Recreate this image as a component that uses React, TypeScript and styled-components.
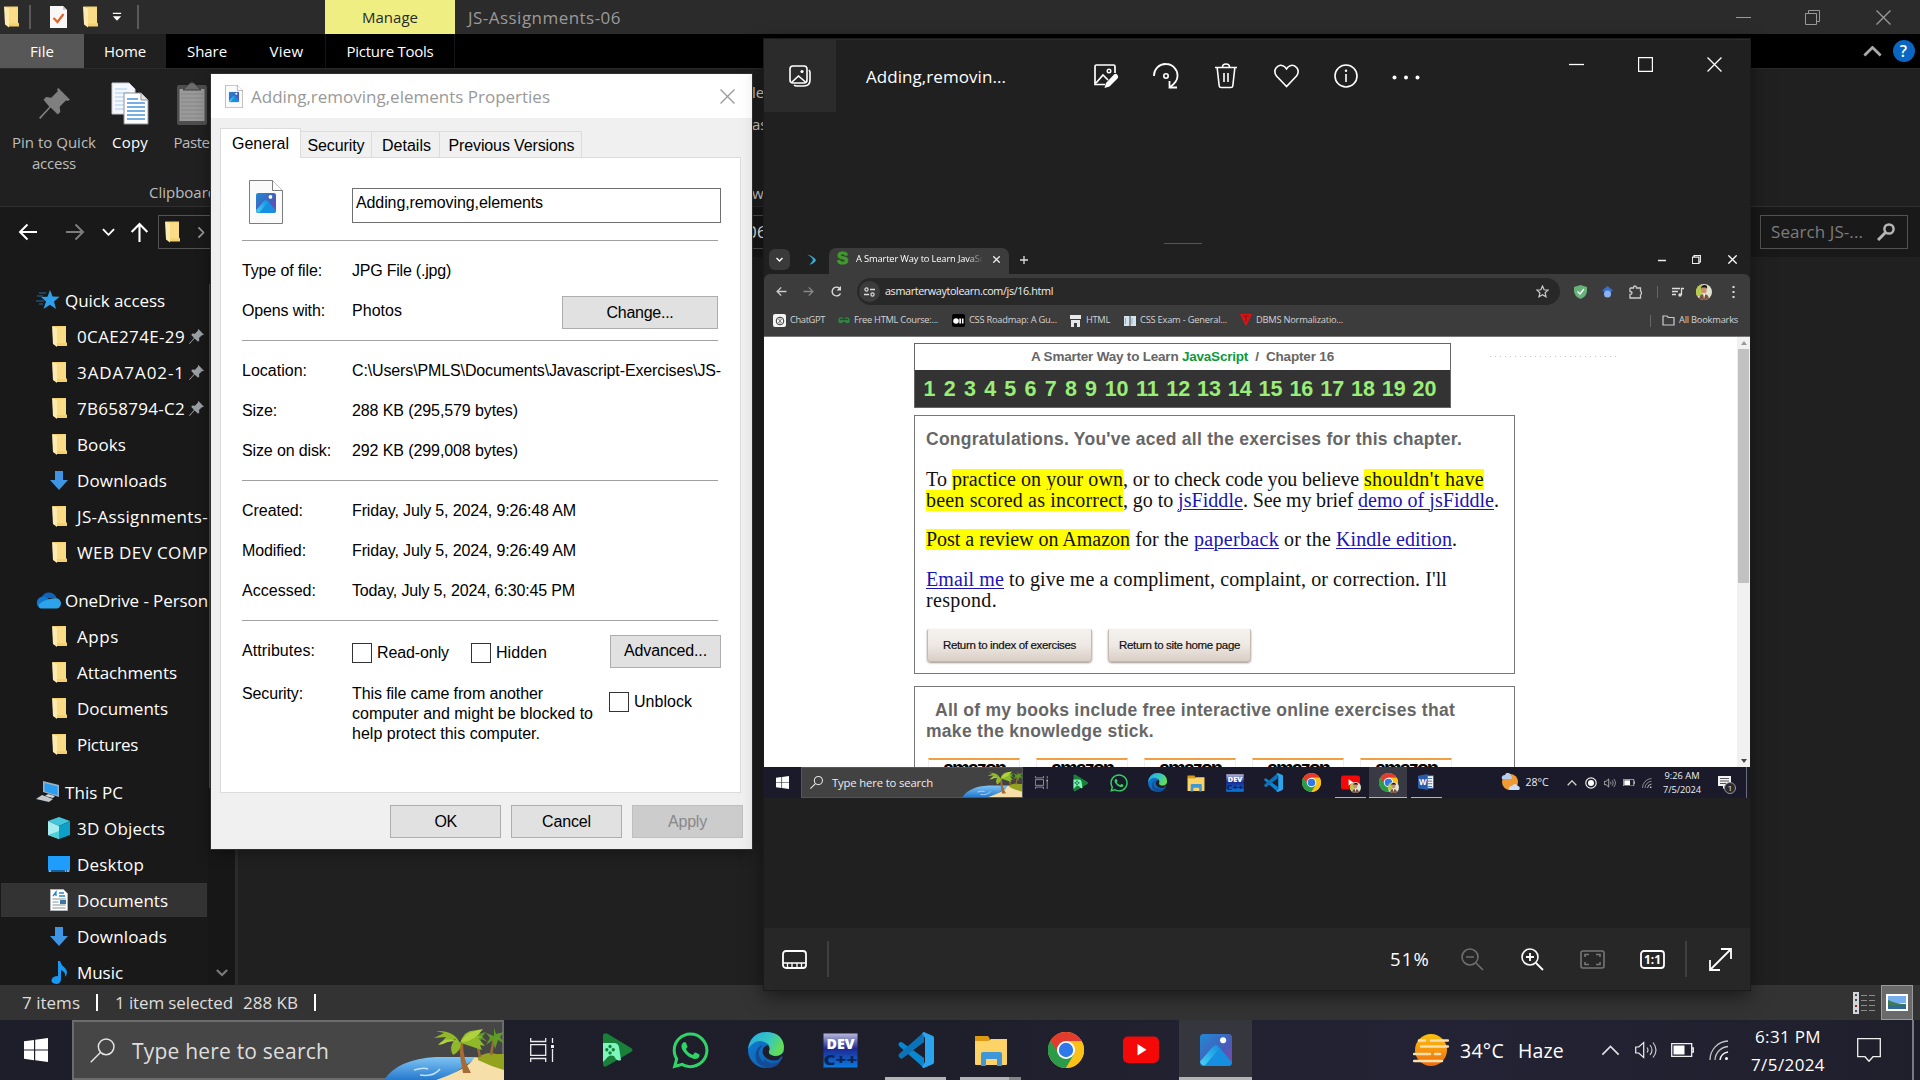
import React, { useLayoutEffect, useRef } from "react";
import styled, { createGlobalStyle, css } from "styled-components";
import { FaWhatsapp } from "react-icons/fa";

const ui = `"Open Sans", "Noto Sans", sans-serif`;
const arial = `"Liberation Sans", Arial, sans-serif`;
const serif = `"Liberation Serif", Georgia, serif`;

const Global = createGlobalStyle`
  *, *::before, *::after { box-sizing: border-box; }
  body { margin: 0; background: #202020; overflow: hidden; }
  svg { display: block; flex: none; }
`;

/* ---------- text that tracks itself to a set measure ---------- */

const FitSpan = styled.span`
  display: inline-block;
  width: max-content;
  white-space: pre;
  flex: none;
`;

function Fit({ w, children }: { w: number; children: string }) {
  const ref = useRef<HTMLSpanElement>(null);
  useLayoutEffect(() => {
    const el = ref.current;
    if (!el) return;
    el.style.letterSpacing = "0px";
    const natural = el.getBoundingClientRect().width;
    el.style.letterSpacing = `${(w - natural) / children.length}px`;
  }, [w, children]);
  return <FitSpan ref={ref}>{children}</FitSpan>;
}

/* ---------- small icons ---------- */

const Folder = ({ w = 15, h = 21 }) => (
  <svg width={w} height={h} viewBox="0 0 15 21">
    <path d="M1 0h13v16l1 1v3H4z" fill="#f5d06f" />
    <path d="M5 1h9v16H5z" fill="#f9dc85" />
    <path d="M0 0l5 2v19l-4-3z" fill="#fdeaae" />
  </svg>
);

const Pushpin = ({ s = 16, c = "#9a9fa5" }) => (
  <svg width={s} height={s} viewBox="0 0 24 24">
    <path d="M15 0l9 9-2 1-1-.5-5 5 .5 4-2 2-5.500-5.500L1 24l-1-1 8-8.500L3.500 9l2-2 4 .5 5-5L14 1z" fill={c} />
  </svg>
);

const Cross = ({ s = 14, c = "#999", t = 1.2 }) => (
  <svg width={s} height={s} viewBox="0 0 14 14">
    <path d="M.5.5l13 13M13.500.5l-13 13" stroke={c} strokeWidth={t} fill="none" />
  </svg>
);

const Minus = ({ w = 15, c = "#999", t = 1 }) => (
  <svg width={w} height={4} viewBox={`0 0 ${w} 4`}>
    <path d={`M0 2.500h${w}`} stroke={c} strokeWidth={t} />
  </svg>
);

const Restore = ({ s = 15, c = "#999", t = 1 }) => (
  <svg width={s} height={s} viewBox="0 0 15 15">
    <path d="M.5 3.500h11v11H.5zM3.500 3.500v-3h11v11h-3" stroke={c} strokeWidth={t} fill="none" />
  </svg>
);

const Chevron = ({ w = 14, h = 8, c = "#fff", t = 2, up = false }) => (
  <svg width={w} height={h} viewBox="0 0 14 8">
    <path d={up ? "M1 7l6-6 6 6" : "M1 1l6 6 6-6"} stroke={c} strokeWidth={t} fill="none" />
  </svg>
);

const Arrow = ({ c = "#fff", s = 20, t = 2, turn = 0 }) => (
  <svg width={s} height={s} viewBox="0 0 20 20">
    <path d="M19 10H2M9.500 2.500L2 10l7.500 7.500" transform={`rotate(${turn} 10 10)`} stroke={c} strokeWidth={t} fill="none" />
  </svg>
);

const PhotoGlyph = ({ w = 36, h = 36 }) => (
  <svg width={w} height={h} viewBox="0 0 36 36" preserveAspectRatio="none">
    <defs>
      <linearGradient id="pgBack" x1="0" y1="0" x2="1" y2="1">
        <stop offset="0" stopColor="#1e8ad6" />
        <stop offset=".6" stopColor="#4a5bb8" />
        <stop offset="1" stopColor="#8446a8" />
      </linearGradient>
      <linearGradient id="pgHill" x1="0" y1="1" x2="1" y2="0">
        <stop offset="0" stopColor="#45d3f5" />
        <stop offset="1" stopColor="#1490df" />
      </linearGradient>
    </defs>
    <rect width="36" height="36" rx="4" fill="url(#pgBack)" />
    <path d="M1 33L15 14q3-3 6 0l15 18q-1 4-4 4H4q-2 0-3-3z" fill="#168fe0" />
    <path d="M0 31L14 15q4-4 8 1L6 35q-5 1-6-4z" fill="url(#pgHill)" />
    <circle cx="26" cy="7" r="3.400" fill="#fff" />
  </svg>
);

const ImageFile = ({ w = 34, h = 44 }) => (
  <svg width={w} height={h} viewBox="0 0 34 44">
    <path d="M.5.5h23l10 10v33H.5z" fill="#fafafa" stroke="#7c7c7c" />
    <path d="M23.500.5v10h10" fill="#fff" stroke="#7c7c7c" />
    <g transform="translate(7 13)"><PhotoGlyph w={20} h={20} /></g>
  </svg>
);

const CheckDoc = () => (
  <svg width="17" height="22" viewBox="0 0 17 22">
    <path d="M0 0h13l4 4v18H0z" fill="#f7f7f7" />
    <path d="M13 0v4h4" fill="#ccc" />
    <path d="M3.500 12l4 4 6-8" stroke="#e2622b" strokeWidth="2.200" fill="none" />
  </svg>
);

const CopyIcon = () => (
  <svg width="38" height="43" viewBox="0 0 38 43">
    <path d="M1 1h17l6 6v25H1z" fill="#f4f8fd" stroke="#c8ccd2" />
    <path d="M4 7h12M4 11h15M4 15h9M4 19h9M4 23h9M4 27h9" stroke="#a9c8ee" />
    <path d="M13 11h17l7 7v24H13z" fill="#fff" stroke="#8d9299" />
    <path d="M30 11v7h7" fill="#e4e4e4" stroke="#8d9299" />
    <path d="M16 17h11M16 21h18M16 25h18M16 29h18M16 33h18M16 37h18" stroke="#4c94dc" strokeWidth="1.300" />
  </svg>
);

const PasteIcon = () => (
  <svg width="30" height="43" viewBox="0 0 30 43">
    <rect x="0" y="3" width="30" height="40" rx="2" fill="#4e4e4e" />
    <path d="M2.500 7h25v32h-25z" fill="#9a9a9a" />
    <path d="M4 12h22M4 16h22M4 20h22M4 24h22M4 28h22M4 32h22M4 36h22" stroke="#868686" />
    <path d="M6 8l5-5q4-5 8 0l5 5z" fill="#6c6c6c" stroke="#3c3c3c" />
  </svg>
);

const Star = () => (
  <svg width="24" height="20" viewBox="0 0 24 20">
    <path d="M14 0l2.600 6.500 7 .3-5.600 4.700 2 7.500-6-4.200L7.500 19l2.500-7.500-5-4.500 6.500-.3z" fill="#2e9fe8" />
    <path d="M3 3h7M1 6h6M0 11h8M3 14h4" stroke="#1e6fae" strokeWidth="1.200" />
  </svg>
);

const DownArrow = () => (
  <svg width="18" height="19" viewBox="0 0 18 19">
    <path d="M5 0h8v9h5l-9 10-9-10h5z" fill="#3e95e4" />
  </svg>
);

const Cloud = () => (
  <svg width="25" height="17" viewBox="0 0 25 17">
    <path d="M5 6Q8 0 13.500.5 19 1 20.500 6z" fill="#0f63b8" />
    <path d="M4 16a6 6 0 0 1 1-11q6-1 9 4l6 7z" fill="#1178cf" />
    <path d="M4.500 16.500Q2 15 3 12q6-5 17-6 5 1 5 6-1 4-4 4.500z" fill="#2ca3ea" />
  </svg>
);

const ThisPc = () => (
  <svg width="24" height="22" viewBox="0 0 24 22">
    <path d="M7 0l16 4v12L7 11z" fill="#9bb0c2" />
    <path d="M8.500 2l13 3.400v8.800l-13-4z" fill="#2b9df0" />
    <path d="M12 13l7 2-2 2-8-2z" fill="#cfd5da" />
    <path d="M6 14l11 4-4 3-13-3z" fill="#c1c8ce" />
  </svg>
);

const Cube = () => (
  <svg width="22" height="22" viewBox="0 0 22 22">
    <path d="M11 0l11 4-11 5L0 4z" fill="#43c6dc" />
    <path d="M0 4l11 5v13L0 18z" fill="#a7ecef" />
    <path d="M22 4L11 9v13l11-4z" fill="#0e9fc9" />
    <path d="M0 18l11-4v8z" fill="#4fd0d9" />
  </svg>
);

const DesktopIcon = () => (
  <svg width="22" height="16" viewBox="0 0 22 16">
    <path d="M0 0h22v16H0z" fill="#1f9dfc" />
    <path d="M0 14h22v2H0z" fill="#0f5f9f" />
    <path d="M1 15h2M17 15h1M19 15h2" stroke="#fff" />
  </svg>
);

const DocIcon = () => (
  <svg width="18" height="22" viewBox="0 0 18 22">
    <path d="M.5.5h13l4 4v17H.5z" fill="#fff" stroke="#b0b5ba" />
    <path d="M3 7l3-4v4M9 4h5M9 7h6" stroke="#2b86c9" strokeWidth="1.300" fill="none" />
    <path d="M2.500 10h13M2.500 13h6M2.500 16h13M2.500 19h13" stroke="#8d9298" />
    <path d="M10 11h6v4h-6z" fill="#3a76a8" />
  </svg>
);

const MusicIcon = () => (
  <svg width="16" height="23" viewBox="0 0 16 23">
    <path d="M7 0h2q1 4 5 7 4 4 0 9 1-5-4-7v9q0 5-5 5-5-.5-4.500-4 1-4 6.500-4z" fill="#1a97ee" />
  </svg>
);

const Lens = ({ s = 24, c = "#e4e4e4", t = 1.4 }) => (
  <svg width={s} height={s} viewBox="0 0 24 24">
    <circle cx="15.500" cy="8.500" r="7.500" stroke={c} strokeWidth={t} fill="none" />
    <path d="M10 14L.7 23.300" stroke={c} strokeWidth={t} />
  </svg>
);

const WinLogo = ({ s = 24 }) => (
  <svg width={s} height={s} viewBox="0 0 24 24">
    <path d="M0 3.300l10-1.400v9.600H0zM11.200 1.700L24 0v11.500H11.200zM0 12.600h10v9.600L0 20.800zM11.200 12.600H24V24l-12.800-1.800z" fill="#fff" />
  </svg>
);

const Beach = ({ w = 120, h = 56 }) => (
  <svg width={w} height={h} viewBox="0 0 120 56">
    <defs>
      <linearGradient id="sea" x1="0" y1="0" x2="0" y2="1">
        <stop offset="0" stopColor="#7ec4f3" />
        <stop offset="1" stopColor="#2779cf" />
      </linearGradient>
    </defs>
    <path d="M0 56Q14 35 52 33h42L60 56z" fill="url(#sea)" />
    <path d="M52 56Q84 45 90 34l30-4v26z" fill="#f6dfa8" />
    <path d="M94 33q10-6 18-3l8 0v16Q106 42 94 36z" fill="#93a31e" />
    <path d="M96 33l-4-19M107 31l3-18" stroke="#9a6a35" strokeWidth="2.500" />
    <path d="M93 12l-9-3 6 5-5 5 8-4 1 9 3-9 7 3-6-5 4-5-7 2-3-4zM110 12l-8-3 4 5-4 7 7-5 2 9 3-9 7 4-5-7 4-5-8 2-2-6z" fill="#5f9c27" />
    <path d="M75 20q1 15 4 29h8Q79 36 79 19z" fill="#a56b35" />
    <path d="M76 19Q70 6 52 7l8 2-10 5 12-1-7 8 17-6q-8 7-3 16 8-4 8-12l21 7-2-5 5 1-7-8 6-1-11-2 5-4Q81 4 76 19z" fill="#8fb92b" />
    <path d="M77 17q8-11 22-12-8 12-20 13zM74 18Q62 12 54 21l5-1q6-4 15-2z" fill="#b0d23c" />
    <path d="M30 46q10-3 14-1M36 51q14 2 20-6" stroke="#bfe3fb" strokeWidth="1.500" fill="none" />
  </svg>
);

const TaskView = ({ s = 24, c = "#ececec" }) => (
  <svg width={s} height={s} viewBox="0 0 24 24">
    <path d="M.7 0v3.500h15V0M.7 24v-3.500h15V24M.7 6.700h15v10.600H.7zM22.500 0v5M22.500 11v13" stroke={c} strokeWidth="1.300" fill="none" />
    <path d="M21 7h3v3h-3z" fill={c} />
  </svg>
);

const PlayGames = ({ s = 36 }) => (
  <svg width={s} height={s} viewBox="0 0 36 36">
    <path d="M5 3q1-3 5-1l23 14q3 2 0 4L9 34q-4 2-4-2z" fill="#188038" />
    <path d="M5 11h11q4 0 5 4l2 13q-4 2-7-4-5-2-8 3l-3 3z" fill="#7df5bd" />
    <path d="M12 12.800a1.700 1.700 0 1 0 .1 0M12 19.200a1.700 1.700 0 1 0 .1 0M8.800 16a1.700 1.700 0 1 0 .1 0M15.200 16a1.700 1.700 0 1 0 .1 0" fill="#188038" />
  </svg>
);

const Edge = ({ s = 36 }) => (
  <svg width={s} height={s} viewBox="0 0 36 36">
    <defs>
      <linearGradient id="edgeTop" x1="0" y1="0" x2="1" y2=".4">
        <stop offset="0" stopColor="#2aa8e0" />
        <stop offset=".6" stopColor="#35c6c4" />
        <stop offset="1" stopColor="#62dc58" />
      </linearGradient>
      <linearGradient id="edgeLow" x1="0" y1="0" x2="1" y2="1">
        <stop offset="0" stopColor="#0f7fd4" />
        <stop offset="1" stopColor="#1058a8" />
      </linearGradient>
    </defs>
    <circle cx="18" cy="18" r="18" fill="url(#edgeLow)" />
    <path d="M0 17Q3 0 19 0q16 1 17 15 0 9-9 9-7 0-6-5 2-3-1-7Q9 4 0 17z" fill="url(#edgeTop)" />
    <path d="M15 13q-8 8-1 16 8 6 18 1-2 4-8 5.500Q5 36 8 20q2-6 7-7z" fill="#134c94" />
    <path d="M20 13q-7 2-5 9 4 8 15 6l4-4 2 3q-1 2-3 3Q24 36 36 36V20q-4 5-10 4-6-1-5-5 1-3-1-6z" fill="#1f1f2c" />
    <path d="M18 36q8 0 14-6-10 4-16-3 0 6 2 9z" fill="#134c94" />
  </svg>
);

const DevCpp = ({ s = 35 }) => (
  <svg width={s} height={s} viewBox="0 0 35 35">
    <defs>
      <linearGradient id="devBg" x1="0" y1="0" x2="0" y2="1">
        <stop offset="0" stopColor="#b9b9dd" />
        <stop offset=".45" stopColor="#1e2a94" />
        <stop offset="1" stopColor="#0a7be0" />
      </linearGradient>
    </defs>
    <path d="M.5.5h34v34H.5z" fill="url(#devBg)" />
    <text x="17.500" y="15.500" textAnchor="middle" fontFamily="Open Sans, sans-serif" fontWeight="800" fontSize="13.500" textLength="28" lengthAdjust="spacingAndGlyphs" fill="#fff">DEV</text>
    <text x="17.500" y="31.500" textAnchor="middle" fontFamily="Open Sans, sans-serif" fontWeight="800" fontSize="13.500" textLength="34" lengthAdjust="spacingAndGlyphs" fill="#0a2358">C++</text>
  </svg>
);

const VsCode = ({ s = 36 }) => (
  <svg width={s} height={s} viewBox="0 0 36 36">
    <path d="M1 11q2-2 4 0l21 15v10L1 14q-1-2 0-3z" fill="#0a85cf" />
    <path d="M1 25q2 3 4 1l21-16V0L1 22q-1 2 0 3z" fill="#0b73b8" />
    <path d="M26 0l9 4q1 .5 1 2v24q0 1.500-1 2l-9 4q-1 0-2-1l3-5V6l-3-5z" fill="#2ba4ee" />
  </svg>
);

const FolderApp = ({ s = 34 }) => (
  <svg width={s} height={s} viewBox="0 0 34 34">
    <path d="M1 3h13l2 3-2 3H1z" fill="#dc9a12" />
    <path d="M1 8h13l3-2h16v25q0 1-1 1H2q-1 0-1-1z" fill="#fbd366" />
    <path d="M7 21q0-2 2-2h17q2 0 2 2v12h-5v-7H12v7H7z" fill="#3f97d8" />
  </svg>
);

const Chrome = ({ s = 36 }) => (
  <svg width={s} height={s} viewBox="0 0 36 36">
    <circle cx="18" cy="18" r="18" fill="#fbc116" />
    <path d="M18 9H33.600A18 18 0 0 0 2.400 9L10.200 22.500z" fill="#e33b2e" />
    <path d="M2.400 9A18 18 0 0 0 18 36l7.800-13.500H12z" fill="#2a9c49" />
    <path d="M18 9h15.600A18 18 0 0 1 18 36l8-13z" fill="#fbc116" />
    <circle cx="18" cy="18" r="9" fill="#fff" />
    <circle cx="18" cy="18" r="7.200" fill="#2f78ea" />
  </svg>
);

const YouTube = ({ s = 36 }) => (
  <svg width={s} height={s} viewBox="0 0 36 36">
    <rect y="4.500" width="36" height="26.500" rx="5" fill="#f40808" />
    <path d="M14.500 12v11.500l9-5.700z" fill="#fff" />
  </svg>
);

const WordApp = ({ s = 18 }) => (
  <svg width={s} height={s} viewBox="0 0 18 18">
    <path d="M9 2h8.500v14H9z" fill="#fff" stroke="#2a5caa" />
    <path d="M11 5h5M11 8h5M11 11h5M11 14h5" stroke="#2a5caa" />
    <path d="M0 2l11-2v18L0 16z" fill="#2a5caa" />
    <text x="5.500" y="12.500" textAnchor="middle" fontFamily="Open Sans, sans-serif" fontWeight="700" fontSize="9" fill="#fff">W</text>
  </svg>
);

const Face = ({ s = 14 }) => (
  <svg width={s} height={s} viewBox="0 0 16 16">
    <defs><clipPath id="faceClip"><circle cx="8" cy="8" r="8" /></clipPath></defs>
    <g clipPath="url(#faceClip)">
      <path d="M0 0h16v16H0z" fill="#dfe3d0" />
      <path d="M0 0h6v12H0z" fill="#b9c94a" />
      <path d="M3 16q0-6 5-6t5 6z" fill="#7c5140" />
      <path d="M7 9l1 6 1.500-6z" fill="#fff" />
      <path d="M5.500 3h5v5q-2.500 3-5 0z" fill="#c98f6f" />
      <path d="M5 5q0-4 3.500-4T11 5L10 3.500H6z" fill="#1d1512" />
    </g>
  </svg>
);

const Haze = () => (
  <svg width="36" height="36" viewBox="0 0 36 36">
    <defs>
      <linearGradient id="hz" x1="0" y1="0" x2="0" y2="1">
        <stop offset="0" stopColor="#fdc10c" />
        <stop offset="1" stopColor="#ee6a10" />
      </linearGradient>
    </defs>
    <circle cx="18" cy="18" r="16" fill="url(#hz)" />
    <path d="M6 8.500h6M18 8.500h17M8 14.500h27M1 22h16M22 22h5M1 29h28" stroke="#fbe0ab" strokeWidth="2.500" strokeLinecap="round" />
  </svg>
);

const SunCloud = () => (
  <svg width="19" height="19" viewBox="0 0 19 19">
    <circle cx="9" cy="9" r="8" fill="#f19a34" />
    <path d="M1 6q-1-4 3-4 1-3 4-2 2 1 2 3 2 1 0 3z" fill="#b9cdf0" />
    <path d="M8 17q-1-4 3-4 3-4 6 0 3 1 1 4z" fill="#cfdcf5" />
  </svg>
);

const Speaker = ({ s = 22 }) => (
  <svg width={s} height={s} viewBox="0 0 22 22">
    <path d="M.7 8h3l5-4.500v15L3.700 14h-3z" stroke="#f0f0f0" fill="none" strokeWidth="1.200" />
    <path d="M12 8.500q2 2.500 0 5M15 6q4 5 0 10M18 3.500q6 7.500 0 15" stroke="#c8c8cc" fill="none" strokeWidth="1.200" />
  </svg>
);

const Battery = ({ w = 23 }) => (
  <svg width={w} height={(w * 14) / 23} viewBox="0 0 23 14">
    <path d="M.7.7h20v12.600H.7zM20.700 5h1.600v4h-1.600" stroke="#f0f0f0" fill="none" strokeWidth="1.300" />
    <path d="M2.500 2.500h11v9h-11z" fill="#fff" />
  </svg>
);

const Wifi = ({ s = 20 }) => (
  <svg width={s} height={s} viewBox="0 0 20 20">
    <path d="M1 20A19 19 0 0 1 19 1M6 20A14 14 0 0 1 19 6.500" stroke="#c4c4c8" fill="none" strokeWidth="1.300" />
    <path d="M11 20a9 9 0 0 1 8-8" stroke="#f4f4f4" fill="none" strokeWidth="1.400" />
    <circle cx="17.500" cy="18.500" r="1.500" fill="#fff" />
  </svg>
);

const Note = ({ s = 24 }) => (
  <svg width={s} height={s} viewBox="0 0 24 24">
    <path d="M.7.7h22.600v18H16l-4 4.600-4-4.600H.7z" stroke="#f0f0f0" fill="none" strokeWidth="1.300" />
  </svg>
);

/* ---------- explorer window ---------- */

const Desktop = styled.main`
  position: relative;
  width: 1920px;
  height: 1080px;
  overflow: hidden;
  background: #202020;
  color: #fff;
  font: 17px/1.36 ${ui};
`;

const Explorer = styled.section`
  display: flex;
  flex-direction: column;
  height: 1020px;
`;

const TitleBar = styled.header`
  display: grid;
  grid-template-columns: 22px 16px 40px 24px 30px 12px 181px 130px 13px 1fr 69px 69px 73px;
  height: 34px;
  align-items: center;
  justify-items: center;
  background: #2b2b2b;
  color: #9a9a9a;
`;

const Tick = styled.i<{ $h: number; $c: string; $w?: number }>`
  width: ${(p) => p.$w ?? 2}px;
  height: ${(p) => p.$h}px;
  background: ${(p) => p.$c};
`;

const ContextTab = styled.div`
  display: flex;
  align-self: stretch;
  width: 130px;
  align-items: center;
  justify-content: center;
  background: #efee83;
  color: #2a2a2a;
  font-size: 15px;
`;

const WindowName = styled.div`
  justify-self: start;
  padding-top: 1px;
`;

const RibbonTabs = styled.nav`
  display: grid;
  grid-template-columns: 84px 82px 82px 77px 130px 1fr 32px 32px;
  height: 34px;
  background: #000;
  font-size: 15px;
`;

const RibbonTab = styled.div<{ $bg?: string; $edge?: boolean }>`
  display: flex;
  align-items: center;
  justify-content: center;
  background: ${(p) => p.$bg ?? "none"};
  ${(p) => p.$edge && css`border: solid #161616; border-width: 0 1px;`}
`;

const Help = styled.span`
  width: 22px;
  height: 22px;
  margin-right: 1px;
  border-radius: 50%;
  background: #0a66c2;
  font: 600 16px/22px ${ui};
  text-align: center;
`;

const Ribbon = styled.div`
  display: flex;
  height: 139px;
  border-bottom: 1px solid #303030;
  border-top: 1px solid #2b2b2b;
  background: #202020;
  color: #bdbdbd;
  font-size: 15px;
`;

const RibbonLeft = styled.div`
  display: flex;
  flex-direction: column;
  width: 240px;
`;

const RibbonButtons = styled.div`
  display: grid;
  grid-template-columns: 108px 44px 79px;
  height: 111px;
`;

const RibbonButton = styled.div<{ $c?: string }>`
  display: flex;
  flex-direction: column;
  align-items: center;
  color: ${(p) => p.$c ?? "#bdbdbd"};
  line-height: 21px;
`;

const ButtonArt = styled.div`
  display: flex;
  height: 63px;
  align-items: center;
  padding-top: 5px;
`;

const GroupName = styled.div`
  padding-left: 149px;
  line-height: 24px;
`;

const Sliver = styled.div`
  display: flex;
  flex-direction: column;
  width: 12px;
  margin-left: 512px;
  overflow: hidden;
  color: #dcdcdc;
  padding-top: 12px;
  line-height: 22px;
  gap: 10px;
`;

const SliverFoot = styled.span`
  padding-top: 37px;
`;

const AddressRow = styled.div`
  display: grid;
  grid-template-columns: 56px 38px 28px 34px 608px 1fr 160px;
  height: 50px;
  align-items: center;
  justify-items: center;
  background: #191919;
`;

const AddressBox = styled.div`
  display: flex;
  justify-self: end;
  align-items: center;
  width: 606px;
  height: 34px;
  padding-left: 6px;
  border: 1px solid #535353;
  overflow: hidden;
`;

const Crumb = styled.span`
  margin-left: auto;
  margin-right: -4px;
`;

const CrumbArrow = styled.span`
  margin-left: 15px;
  transform: rotate(-90deg);
`;

const FindBox = styled.div`
  display: flex;
  justify-self: start;
  width: 148px;
  height: 34px;
  align-items: center;
  justify-content: space-between;
  padding: 0 12px 0 10px;
  border: 1px solid #535353;
  color: #7d7d7d;
`;

const Body = styled.div`
  display: flex;
  flex: 1;
  min-height: 0;
`;

const Tree = styled.ul`
  width: 208px;
  margin: 0;
  padding: 25px 0 0;
  list-style: none;
  background: #191919;
  overflow: hidden;
  white-space: nowrap;
`;

const TreeRow = styled.li<{ $child?: boolean; $first?: boolean; $on?: boolean }>`
  display: grid;
  grid-template-columns: 26px auto;
  height: ${(p) => (p.$on ? 34 : 36)}px;
  margin: ${(p) => (p.$on ? "1px" : p.$first ? "12px 0 0" : "0")};
  padding-left: ${(p) => (p.$child ? (p.$on ? 46 : 47) : 36)}px;
  align-items: center;
  background: ${(p) => (p.$on ? "#333" : "none")};
`;

const TreeIcon = styled.span`
  display: flex;
  justify-content: center;
  padding-right: 2px;
`;

const TreeName = styled.span<{ $child?: boolean }>`
  display: flex;
  align-items: center;
  gap: 4px;
  padding: 1px 0 0 ${(p) => (p.$child ? 4 : 3)}px;
`;

const TreeScroll = styled.div`
  display: flex;
  width: 27px;
  align-items: flex-end;
  justify-content: center;
  padding-bottom: 8px;
  background: #171717;
`;

const TreeThumb = styled.div`
  position: absolute;
  left: 209px;
  top: 284px;
  width: 22px;
  height: 504px;
  background: #4d4d4d;
`;

const Pane = styled.div`
  flex: 1;
  border-left: 3px solid #2b2b2b;
  background: #202020;
`;

const Status = styled.footer`
  display: flex;
  height: 35px;
  align-items: center;
  padding-left: 22px;
  background: #333;
  color: #dedede;
`;

const StatusTick = styled.i<{ $r: number }>`
  width: 2px;
  height: 17px;
  margin: 0 ${(p) => p.$r}px 0 16px;
  background: #fff;
`;

const StatusGap = styled.i`
  width: 10px;
`;

const StatusViews = styled.div`
  display: flex;
  margin-left: auto;
  align-items: center;
  padding-right: 7px;
  gap: 6px;
`;

const ViewOn = styled.div`
  display: flex;
  width: 32px;
  height: 35px;
  align-items: center;
  justify-content: center;
  border: 1px solid #9a9a9a;
  background: #6a6a6a;
`;

type Node = { name: string; w: number; icon: React.ReactNode; child?: boolean; first?: boolean; on?: boolean; pin?: boolean };

const tree: Node[] = [
  { name: "Quick access", w: 100, icon: <Star /> },
  { name: "0CAE274E-29", w: 108, icon: <Folder />, child: true, pin: true },
  { name: "3ADA7A02-1", w: 108, icon: <Folder />, child: true, pin: true },
  { name: "7B658794-C2", w: 108, icon: <Folder />, child: true, pin: true },
  { name: "Books", w: 49, icon: <Folder />, child: true },
  { name: "Downloads", w: 90, icon: <DownArrow />, child: true },
  { name: "JS-Assignments-", w: 131, icon: <Folder />, child: true },
  { name: "WEB DEV COMP", w: 131, icon: <Folder />, child: true },
  { name: "OneDrive - Person", w: 143, icon: <Cloud />, first: true },
  { name: "Apps", w: 42, icon: <Folder />, child: true },
  { name: "Attachments", w: 100, icon: <Folder />, child: true },
  { name: "Documents", w: 91, icon: <Folder />, child: true },
  { name: "Pictures", w: 61, icon: <Folder />, child: true },
  { name: "This PC", w: 58, icon: <ThisPc />, first: true },
  { name: "3D Objects", w: 88, icon: <Cube />, child: true },
  { name: "Desktop", w: 67, icon: <DesktopIcon />, child: true },
  { name: "Documents", w: 91, icon: <DocIcon />, child: true, on: true },
  { name: "Downloads", w: 90, icon: <DownArrow />, child: true },
  { name: "Music", w: 46, icon: <MusicIcon />, child: true },
];

function ExplorerWindow() {
  return (
    <Explorer>
      <TitleBar>
        <Folder w={15} h={22} />
        <Tick $h={24} $c="#5a5a5a" />
        <CheckDoc />
        <Folder w={15} h={22} />
        <svg width="10" height="10" viewBox="0 0 12 10"><path d="M1 0h10v1.500H1zM1 4h10L6 9.500z" fill="#fff" /></svg>
        <Tick $h={24} $c="#5a5a5a" />
        <span />
        <ContextTab><Fit w={56}>Manage</Fit></ContextTab>
        <span />
        <WindowName><Fit w={153}>JS-Assignments-06</Fit></WindowName>
        <Minus w={15} />
        <Restore />
        <Cross s={15} />
      </TitleBar>
      <RibbonTabs>
        <RibbonTab $bg="#575757"><Fit w={24}>File</Fit></RibbonTab>
        <RibbonTab $bg="#202020"><Fit w={42}>Home</Fit></RibbonTab>
        <RibbonTab><Fit w={40}>Share</Fit></RibbonTab>
        <RibbonTab><Fit w={34}>View</Fit></RibbonTab>
        <RibbonTab $edge><Fit w={87}>Picture Tools</Fit></RibbonTab>
        <span />
        <RibbonTab><Chevron up w={19} h={11} c="#aaa" /></RibbonTab>
        <RibbonTab><Help>?</Help></RibbonTab>
      </RibbonTabs>
      <Ribbon>
        <RibbonLeft>
          <RibbonButtons>
            <RibbonButton>
              <ButtonArt><Pushpin s={31} c="#7f7f7f" /></ButtonArt>
              <Fit w={84}>Pin to Quick</Fit>
              <Fit w={44}>access</Fit>
            </RibbonButton>
            <RibbonButton $c="#fff">
              <ButtonArt><CopyIcon /></ButtonArt>
              <Fit w={36}>Copy</Fit>
            </RibbonButton>
            <RibbonButton>
              <ButtonArt><PasteIcon /></ButtonArt>
              <Fit w={36}>Paste</Fit>
            </RibbonButton>
          </RibbonButtons>
          <GroupName><Fit w={68}>Clipboard</Fit></GroupName>
        </RibbonLeft>
        <Sliver><span>le</span><span>as</span><SliverFoot>w</SliverFoot></Sliver>
      </Ribbon>
      <AddressRow>
        <Arrow />
        <Arrow c="#7d7d7d" turn={180} />
        <Chevron w={13} h={8} />
        <Arrow turn={90} s={21} />
        <AddressBox>
          <Folder w={15} h={22} />
          <CrumbArrow><Chevron w={12} h={7} c="#999" /></CrumbArrow>
          <Crumb><Fit w={20}>06</Fit></Crumb>
        </AddressBox>
        <span />
        <FindBox>
          <Fit w={92}>Search JS-...</Fit>
          <svg width="18" height="18" viewBox="0 0 18 18"><circle cx="12" cy="6" r="4.600" stroke="#b5b5b5" strokeWidth="2.500" fill="none" /><path d="M8.500 9.500L1 17" stroke="#b5b5b5" strokeWidth="3" /></svg>
        </FindBox>
      </AddressRow>
      <Body>
        <Tree>
          {tree.map((n, i) => (
            <TreeRow key={i} $child={n.child} $first={n.first} $on={n.on}>
              <TreeIcon>{n.icon}</TreeIcon>
              <TreeName $child={n.child}>
                <Fit w={n.w}>{n.name}</Fit>
                {n.pin && <Pushpin s={15} />}
              </TreeName>
            </TreeRow>
          ))}
        </Tree>
        <TreeScroll><Chevron w={12} h={9} c="#7a7a7a" t={2.500} /></TreeScroll>
        <TreeThumb />
        <Pane />
      </Body>
      <Status>
        <Fit w={58}>7 items</Fit>
        <StatusTick $r={17} />
        <Fit w={118}>1 item selected</Fit>
        <StatusGap />
        <Fit w={55}>288 KB</Fit>
        <StatusTick $r={0} />
        <StatusViews>
          <svg width="22" height="22" viewBox="0 0 22 22">
            <path d="M0 0h6v22H0z" fill="#d5d5d5" />
            <path d="M2 2h2v2H2zM2 7h2v2H2zM2 18h2v2H2z" fill="#35505c" /><path d="M2 13h2v2H2z" fill="#a02020" />
            <path d="M8 3.500h6M16 3.500h6M8 8.500h6M16 8.500h6M8 13.500h6M16 13.500h6M8 18.500h6M16 18.500h6" stroke="#8c8c8c" />
          </svg>
          <ViewOn>
            <svg width="22" height="17" viewBox="0 0 22 17">
              <path d="M0 0h22v17H0z" fill="#fff" /><path d="M2 2h18v7H2z" fill="#76aef0" />
              <path d="M2 6q8 4 18 4v2H2z" fill="#3d7a55" /><path d="M2 11h18v4H2z" fill="#2f6b93" />
            </svg>
          </ViewOn>
        </StatusViews>
      </Status>
    </Explorer>
  );
}

/* ---------- properties dialog ---------- */

const Dialog = styled.section`
  position: absolute;
  left: 211px;
  top: 74px;
  display: flex;
  flex-direction: column;
  width: 541px;
  height: 775px;
  background: #f0f0f0;
  color: #000;
  font: 16px/20px ${arial};
  box-shadow: 0 0 0 1px #2e2e2e, 0 3px 14px rgba(0, 0, 0, 0.4);
`;

const DialogTitle = styled.header`
  display: flex;
  height: 44px;
  align-items: center;
  padding: 1px 17px 0 14px;
  gap: 8px;
  background: #fff;
  color: #999;
  font: 17px/24px ${ui};
  & > :last-child { margin-left: auto; }
`;

const DialogTabs = styled.nav`
  display: flex;
  height: 39px;
  align-items: flex-end;
  padding-left: 9px;
`;

const DialogTab = styled.div<{ $w: number; $on?: boolean; $dx?: number }>`
  display: flex;
  width: ${(p) => p.$w}px;
  height: ${(p) => (p.$on ? 30 : 26)}px;
  align-items: center;
  justify-content: center;
  padding-top: ${(p) => (p.$on ? 0 : 3)}px;
  padding-left: ${(p) => p.$dx ?? 0}px;
  margin-bottom: ${(p) => (p.$on ? -1 : 0)}px;
  border: 1px solid #dcdcdc;
  border-bottom: 0;
  ${(p) => !p.$on && css`border-left: 0;`}
  background: ${(p) => (p.$on ? "#fff" : "#f0f0f0")};
  z-index: 1;
`;

const DialogPanel = styled.div`
  width: 521px;
  height: 636px;
  margin-left: 9px;
  padding: 0 22px 0 21px;
  border: 1px solid #dcdcdc;
  background: #fff;
`;

const FileHead = styled.div`
  display: grid;
  grid-template-columns: 110px 369px;
  height: 82px;
  align-items: start;
  padding-top: 22px;
  & > svg { margin-left: 7px; }
`;

const NameInput = styled.div`
  height: 35px;
  margin-top: 8px;
  padding: 4px 3px;
  border: 1px solid #6f6f6f;
`;

const Section = styled.div`
  padding: 10px 0 9px;
  border-top: 1px solid #a0a0a0;
  width: 476px;
`;

const PropRow = styled.div`
  display: grid;
  grid-template-columns: 110px auto 1fr;
  height: 40px;
  align-items: center;
`;

const PushButton = styled.div<{ $w: number; $off?: boolean }>`
  display: flex;
  width: ${(p) => p.$w}px;
  height: 33px;
  align-items: center;
  justify-content: center;
  border: 1px solid ${(p) => (p.$off ? "#bfbfbf" : "#adadad")};
  background: ${(p) => (p.$off ? "#ccc" : "#e1e1e1")};
  color: ${(p) => (p.$off ? "#888" : "#000")};
`;

const ChangeSlot = styled.div`
  justify-self: end;
  padding-top: 3px;
`;

const AttrRow = styled.div`
  display: grid;
  grid-template-columns: 110px 119px 139px 111px;
  height: 40px;
  align-items: center;
  width: 480px;
`;

const Check = styled.div`
  display: flex;
  align-items: center;
  gap: 5px;
  padding-top: 3px;
`;

const Tickbox = styled.i`
  width: 20px;
  height: 20px;
  border: 1px solid #333;
  background: #fff;
`;

const SecurityRow = styled.div`
  display: grid;
  grid-template-columns: 110px 257px 1fr;
  padding-top: 13px;
`;

const SecurityText = styled.div`
  display: flex;
  flex-direction: column;
  align-items: flex-start;
`;

const Unblock = styled.div`
  padding-top: 5px;
`;

const DialogFoot = styled.footer`
  display: flex;
  justify-content: flex-end;
  padding: 12px 9px 0 0;
  gap: 10px;
`;

const Prop = ({ k, kw, v, vw, children }: { k: string; kw: number; v: string; vw: number; children?: React.ReactNode }) => (
  <PropRow>
    <Fit w={kw}>{k}</Fit>
    <Fit w={vw}>{v}</Fit>
    {children}
  </PropRow>
);

function PropertiesDialog() {
  return (
    <Dialog>
      <DialogTitle>
        <ImageFile w={18} h={23} />
        <Fit w={299}>Adding,removing,elements Properties</Fit>
        <Cross s={15} />
      </DialogTitle>
      <DialogTabs>
        <DialogTab $w={81} $on><Fit w={57}>General</Fit></DialogTab>
        <DialogTab $w={71}><Fit w={57}>Security</Fit></DialogTab>
        <DialogTab $w={68} $dx={2}><Fit w={49}>Details</Fit></DialogTab>
        <DialogTab $w={142} $dx={2}><Fit w={126}>Previous Versions</Fit></DialogTab>
      </DialogTabs>
      <DialogPanel>
        <FileHead>
          <ImageFile />
          <NameInput><Fit w={187}>Adding,removing,elements</Fit></NameInput>
        </FileHead>
        <Section>
          <Prop k="Type of file:" kw={80} v="JPG File (.jpg)" vw={99} />
          <Prop k="Opens with:" kw={83} v="Photos" vw={50}>
            <ChangeSlot><PushButton $w={156}><Fit w={67}>Change...</Fit></PushButton></ChangeSlot>
          </Prop>
        </Section>
        <Section>
          <Prop k="Location:" kw={65} v="C:\Users\PMLS\Documents\Javascript-Exercises\JS-" vw={369} />
          <Prop k="Size:" kw={35} v="288 KB (295,579 bytes)" vw={166} />
          <Prop k="Size on disk:" kw={89} v="292 KB (299,008 bytes)" vw={166} />
        </Section>
        <Section>
          <Prop k="Created:" kw={61} v="Friday, July 5, 2024, 9:26:48 AM" vw={224} />
          <Prop k="Modified:" kw={64} v="Friday, July 5, 2024, 9:26:49 AM" vw={224} />
          <Prop k="Accessed:" kw={74} v="Today, July 5, 2024, 6:30:45 PM" vw={223} />
        </Section>
        <Section>
          <AttrRow>
            <Fit w={73}>Attributes:</Fit>
            <Check><Tickbox /><Fit w={72}>Read-only</Fit></Check>
            <Check><Tickbox /><Fit w={51}>Hidden</Fit></Check>
            <PushButton $w={111}><Fit w={83}>Advanced...</Fit></PushButton>
          </AttrRow>
          <SecurityRow>
            <Fit w={61}>Security:</Fit>
            <SecurityText>
              <Fit w={191}>This file came from another</Fit>
              <Fit w={241}>computer and might be blocked to</Fit>
              <Fit w={188}>help protect this computer.</Fit>
            </SecurityText>
            <Unblock><Check><Tickbox /><Fit w={58}>Unblock</Fit></Check></Unblock>
          </SecurityRow>
        </Section>
      </DialogPanel>
      <DialogFoot>
        <PushButton $w={111}><Fit w={22}>OK</Fit></PushButton>
        <PushButton $w={111}><Fit w={49}>Cancel</Fit></PushButton>
        <PushButton $w={111} $off><Fit w={39}>Apply</Fit></PushButton>
      </DialogFoot>
    </Dialog>
  );
}

/* ---------- photos window ---------- */

const Photos = styled.section`
  position: absolute;
  left: 764px;
  top: 39px;
  display: flex;
  flex-direction: column;
  width: 986px;
  height: 951px;
  background: #202020;
  box-shadow: 0 0 0 1px #1b1b1b, 0 6px 18px rgba(0, 0, 0, 0.5);
`;

const PhotosBar = styled.header`
  display: grid;
  grid-template-columns: 72px 30px 210px 60px 60px 60px 60px 60px 60px 106px 69px 69px 68px;
  height: 204px;
  align-items: start;
  border-top: 1px solid #2b2b2b;
`;

const BarCell = styled.div<{ $y: number }>`
  display: flex;
  height: 24px;
  margin-top: ${(p) => p.$y}px;
  align-items: center;
  justify-content: center;
`;

const HomeTile = styled.div`
  display: flex;
  height: 72px;
  align-items: center;
  justify-content: center;
  background: #2b2b2b;
`;

const PhotoTitle = styled.div`
  margin-top: 25px;
`;

const PhotoTop = styled.div`
  height: 2px;
  padding-left: 400px;
  &::before { content: ""; display: block; width: 38px; height: 1px; background: #555; }
`;

const TabStrip = styled.div`
  display: grid;
  grid-template-columns: 30px 34px 182px 28px 1fr 35px 35px 36px;
  height: 29px;
  align-items: center;
  justify-items: center;
  font-size: 9.300px;
`;

const TabMenu = styled.div`
  display: flex;
  width: 21px;
  height: 21px;
  align-items: center;
  justify-content: center;
  border-radius: 6px;
  background: #3a3a3a;
`;

const WebTab = styled.div`
  display: flex;
  align-self: end;
  width: 180px;
  height: 26px;
  align-items: center;
  padding: 0 9px 4px 8px;
  gap: 7px;
  border-radius: 7px 7px 0 0;
  background: #3c3c3c;
  & > :last-child { margin-left: auto; }
`;

const SiteMark = styled.b`
  width: 12px;
  color: #3f9b2b;
  font: 900 17px/18px ${arial};
  -webkit-text-stroke: 1px #3f9b2b;
`;

const FadeTitle = styled.span`
  width: 127px;
  overflow: hidden;
  -webkit-mask-image: linear-gradient(90deg, #000 88%, transparent);
`;

const ChromeBar = styled.div`
  height: 63px;
  border-bottom: 1px solid #777;
  border-radius: 6px 6px 0 0;
  background: #3c3c3c;
  font-size: 9.300px;
  color: #d4d4d4;
`;

const UrlRow = styled.div`
  display: grid;
  grid-template-columns: 4px 27px 27px 29px 6px 703px 7px 27px 27px 28px 16px 26px 26px 32px;
  height: 34px;
  align-items: center;
  justify-items: center;
  padding-top: 1px;
`;

const Pill = styled.div`
  display: flex;
  width: 703px;
  height: 27px;
  align-items: center;
  padding: 0 11px 0 2px;
  gap: 5px;
  border-radius: 14px;
  background: #282828;
  color: #eee;
  font-size: 10.800px;
  & > :last-child { margin-left: auto; }
`;

const Tune = styled.span`
  display: flex;
  width: 21px;
  height: 21px;
  align-items: center;
  justify-content: center;
  border-radius: 50%;
  background: #3c3c3c;
`;

const Marks = styled.div`
  display: grid;
  grid-template-columns: 9px 65px 114px 117px 54px 117px 1fr 12px 88px;
  height: 25px;
  align-items: center;
`;

const Mark = styled.span`
  display: flex;
  align-items: center;
  gap: 4px;
`;

const MarkIcon = styled.span<{ $bg?: string }>`
  display: flex;
  width: 13px;
  height: 13px;
  align-items: center;
  justify-content: center;
  border-radius: 2px;
  background: ${(p) => p.$bg ?? "none"};
`;

const PageArea = styled.div`
  display: flex;
  height: 430px;
  background: #fff;
  overflow: hidden;
  color: #111;
`;

const PageMain = styled.div`
  width: 973px;
  padding: 6px 0 0 150px;
`;

const Masthead = styled.div`
  display: flex;
  align-items: flex-start;
`;

const ChapterBox = styled.div`
  width: 537px;
  height: 65px;
  border: 1px solid #666;
  background: #333;
`;

const ChapterTitle = styled.div`
  display: flex;
  height: 26px;
  align-items: center;
  justify-content: center;
  background: #fff;
  color: #666;
  font: 700 13.500px/18px ${arial};
`;

const Green = styled.span`
  color: #0c9a3c;
`;

const Numbers = styled.div`
  display: grid;
  grid-template-columns: 4.500px repeat(9, 20.200px) repeat(11, 30.800px);
  height: 37px;
  align-items: center;
  justify-items: center;
  color: #99ee77;
  font: 700 21.500px/24px ${arial};
`;

const Dots = styled.i`
  width: 130px;
  height: 1px;
  margin: 13px 0 0 39px;
  background: repeating-linear-gradient(90deg, #c4c4c4 0 1px, transparent 1px 5px);
`;

const Card = styled.div<{ $h: number; $top: number }>`
  width: 601px;
  height: ${(p) => p.$h}px;
  margin-top: ${(p) => p.$top}px;
  padding: 13px 0 0 11px;
  border: 1px solid #777;
`;

const CardHead = styled.div<{ $in?: number }>`
  height: 21px;
  padding-left: ${(p) => p.$in ?? 0}px;
  color: #666;
  font: 700 17.500px/21px ${arial};
`;

const Para = styled.div`
  margin-top: 18.500px;
  font: 20px/21px ${serif};
`;

const Line = styled.div`
  display: flex;
  height: 21px;
`;

const Hi = styled.span`
  background: #ff0;
`;

const Link = styled.span`
  color: #1a14b4;
  & > span {
    text-decoration: underline 1px;
    text-underline-offset: 2px;
  }
`;

const WebButtons = styled.div`
  display: flex;
  gap: 16px;
  margin: 18px 0 0 1px;
`;

const WebButton = styled.div<{ $w: number }>`
  display: flex;
  width: ${(p) => p.$w}px;
  height: 33px;
  align-items: center;
  justify-content: center;
  border-radius: 2px 2px 4px 4px;
  background: linear-gradient(#f5f1ee, #eee9e4 50%, #d9cec4);
  border: solid #c5bab0;
  border-width: 0 1px 1px;
  box-shadow: 0 1px 2px rgba(90, 70, 60, 0.6);
  font: 11.500px/14px ${arial};
  color: #111;
  -webkit-text-stroke: 0.2px #111;
`;

const Stores = styled.div`
  display: flex;
  gap: 16px;
  margin: 16px 0 0 2px;
`;

const Store = styled.div`
  width: 92px;
  height: 40px;
  border: solid #eee;
  border-top: 2px solid #f0a040;
  border-width: 2px 1px 0;
  text-align: center;
  font: 700 20px/17px ${arial};
  color: #000;
`;

const PageScroll = styled.div`
  display: flex;
  flex-direction: column;
  width: 13px;
  align-items: center;
  background: #f1f1f1;
`;

const PageThumb = styled.i`
  width: 11px;
  height: 234px;
  background: #c1c1c1;
`;

const ScrollEnd = styled.span<{ $last?: boolean }>`
  display: flex;
  height: 12px;
  align-items: center;
  margin-top: ${(p) => (p.$last ? "auto" : 0)};
`;

const MiniBar = styled.div`
  display: grid;
  grid-template-columns: 37px 222px 37px 39px 39px 38px 39px 39px 38px 39px 38px 38px 38px 47px 36px 18px 17px 18px 19px 19px 19px 18px 52px 34px 8px;
  height: 31px;
  align-items: center;
  justify-items: center;
  background: #1b1a2a;
  color: #eee;
  font-size: 10.500px;
`;

const MiniSearch = styled.div`
  display: flex;
  width: 222px;
  height: 31px;
  align-items: center;
  padding-left: 8px;
  gap: 9px;
  border: 1px solid #565656;
  background: #424242;
  font-size: 11.300px;
  overflow: hidden;
  & > :last-child { margin: 0 -1px 0 auto; align-self: flex-end; }
`;

const Running = styled.div<{ $on?: boolean }>`
  display: flex;
  position: relative;
  width: ${(p) => (p.$on ? 38 : 31)}px;
  height: 31px;
  align-items: center;
  justify-content: center;
  border-bottom: 1px solid #b5b5b5;
  background: ${(p) => (p.$on ? "#3a3a45" : "none")};
`;

const Badge = styled.span<{ $r: number }>`
  position: absolute;
  right: ${(p) => p.$r}px;
  bottom: 4px;
`;

const MiniTemp = styled.span`
  margin: 0 -4px;
`;

const MiniClock = styled.div`
  display: flex;
  flex-direction: column;
  align-items: center;
  font-size: 9.300px;
  line-height: 14px;
`;

const Bubble = styled.span`
  position: relative;
  display: flex;
`;

const Count = styled.span`
  position: absolute;
  left: 6px;
  top: 6px;
  width: 12px;
  height: 12px;
  border: 1px solid #999;
  border-radius: 50%;
  background: #2a2a35;
  font: 8px/10px ${ui};
  text-align: center;
`;

const PhotosFoot = styled.footer`
  display: grid;
  grid-template-columns: 60px 8px 544px 66px 60px 60px 60px 60px 8px 60px;
  height: 62px;
  margin-top: auto;
  align-items: center;
  justify-items: center;
  background: #272727;
`;

const PhotosZoom = styled.div`
  justify-self: end;
  padding-right: 12px;
  font-size: 18.500px;
`;

function BrowserShot() {
  return (
    <>
      <PhotoTop />
      <TabStrip>
        <TabMenu><Chevron w={7} h={5} t={2.500} /></TabMenu>
        <svg width="9" height="13" viewBox="0 0 11 13"><path d="M0 0q9 3 11 7-1 4-8 6 5-5 4-7Q5 3 0 0z" fill="#39a9dc" /></svg>
        <WebTab>
          <SiteMark>S</SiteMark>
          <FadeTitle><Fit w={134}>A Smarter Way to Learn JavaScri</Fit></FadeTitle>
          <Cross s={7} c="#eee" t={2.500} />
        </WebTab>
        <svg width="8" height="8" viewBox="0 0 8 8"><path d="M4 0v8M0 4h8" stroke="#ddd" strokeWidth="1.300" /></svg>
        <span />
        <Minus w={8} c="#eee" t={1.500} />
        <Restore s={9} c="#eee" t={2.200} />
        <Cross s={9} c="#fff" t={2} />
      </TabStrip>
      <ChromeBar>
        <UrlRow>
          <span />
          <Arrow s={11} c="#ccc" t={2.400} />
          <Arrow s={11} c="#888" t={2.400} turn={180} />
          <svg width="11" height="11" viewBox="0 0 11 11"><path d="M9.500 7.500A4.400 4.400 0 1 1 8.500 2.200" stroke="#ddd" strokeWidth="1.400" fill="none" /><path d="M10 0v4.500H5.500z" fill="#ddd" /></svg>
          <span />
          <Pill>
            <Tune><svg width="11" height="10" viewBox="0 0 11 10"><path d="M6 2.500h5M0 7.500h5" stroke="#ddd" strokeWidth="1.400" /><circle cx="2.500" cy="2.500" r="1.600" stroke="#ddd" fill="none" strokeWidth="1.200" /><circle cx="8.500" cy="7.500" r="1.600" stroke="#ddd" fill="none" strokeWidth="1.200" /></svg></Tune>
            <Fit w={168}>asmarterwaytolearn.com/js/16.html</Fit>
            <svg width="13" height="13" viewBox="0 0 13 13"><path d="M6.500 1l1.600 3.800 4 .3-3 2.700.9 4-3.500-2.100L3 11.800l.9-4-3-2.700 4-.3z" stroke="#ccc" fill="none" strokeWidth="1.200" /></svg>
          </Pill>
          <span />
          <svg width="13" height="14" viewBox="0 0 13 14"><path d="M6.500 0L13 2v4q0 5-6.500 8Q0 11 0 6V2z" fill="#67b279" /><path d="M3.500 6.500l2.500 2.500 4-5" stroke="#fff" fill="none" strokeWidth="1.300" /></svg>
          <svg width="11" height="12" viewBox="0 0 11 12"><path d="M5.500 0L11 4.500 5.500 8 0 4.500z" fill="#3a70c8" /><circle cx="5.500" cy="8" r="3.500" fill="#8ab4f8" /></svg>
          <svg width="13" height="14" viewBox="0 0 13 14"><path d="M1 3h3.500q0-2 1.500-2t1.500 2h4v3.500M11.500 9.500V13H1V9.500q2 0 2-1.500T1 6.500V3M11.500 6.500q1.200.3 1.200 1.500t-1.200 1.500" stroke="#ccc" fill="none" strokeWidth="1.300" /></svg>
          <Tick $h={12} $c="#666" $w={1} />
          <svg width="12" height="10" viewBox="0 0 12 10"><path d="M0 1.500h8M0 4.500h6M0 7.500h4M9.500 8V1.500H12" stroke="#ddd" strokeWidth="1.300" fill="none" /><circle cx="8" cy="8" r="1.700" fill="#ddd" /></svg>
          <Face s={16} />
          <svg width="3" height="12" viewBox="0 0 3 12"><path d="M.5 0h2v2h-2zM.5 5h2v2h-2zM.5 10h2v2h-2z" fill="#ddd" /></svg>
        </UrlRow>
        <Marks>
          <span />
          <Mark><MarkIcon $bg="#f4f4f4"><svg width="10" height="10" viewBox="0 0 10 10"><circle cx="5" cy="5" r="3.800" stroke="#333" fill="none" /><path d="M3 3l4 4M7 3L3 7M5 1v8" stroke="#555" strokeWidth=".6" /></svg></MarkIcon><Fit w={35}>ChatGPT</Fit></Mark>
          <Mark><svg width="12" height="7" viewBox="0 0 12 7"><path d="M5 1.500Q1-.5 1 3.500T5.500 4H1M7 1.500q4-2 4 2T6.500 4H11" stroke="#2f8d46" strokeWidth="1.300" fill="none" /></svg><Fit w={84}>Free HTML Course:...</Fit></Mark>
          <Mark><MarkIcon $bg="#000"><svg width="11" height="6" viewBox="0 0 11 6"><circle cx="3" cy="3" r="2.800" fill="#fff" /><path d="M6.300.5h1.800v5H6.300zM9 .5h1.500v5H9z" fill="#fff" /></svg></MarkIcon><Fit w={88}>CSS Roadmap: A Gu...</Fit></Mark>
          <Mark><MarkIcon><svg width="11" height="12" viewBox="0 0 11 12"><path d="M0 0h11v4H0zM1 5h9v7H7V8H4v4H1z" fill="#e8e8e8" /></svg></MarkIcon><Fit w={24}>HTML</Fit></Mark>
          <Mark><MarkIcon><svg width="12" height="12" viewBox="0 0 12 12"><path d="M0 1h5.500v10H0zM6.500 1H12v10H6.500z" fill="#d5e4ec" /><path d="M1.500 3v6M8 3v6" stroke="#8fb0c0" /></svg></MarkIcon><Fit w={87}>CSS Exam - General...</Fit></Mark>
          <Mark><svg width="12" height="12" viewBox="0 0 12 12"><path d="M0 0h12L6 12z" fill="#e01414" /><path d="M3 2h6M6 2v6" stroke="#801010" /></svg><Fit w={87}>DBMS Normalizatio...</Fit></Mark>
          <Tick $h={12} $c="#666" $w={1} />
          <Mark><svg width="13" height="11" viewBox="0 0 13 11"><path d="M1 1h4l1.300 1.500H12v7.500H1z" stroke="#ccc" fill="none" strokeWidth="1.200" /></svg><Fit w={59}>All Bookmarks</Fit></Mark>
        </Marks>
      </ChromeBar>
      <PageArea>
        <PageMain>
          <Masthead>
            <ChapterBox>
              <ChapterTitle>
                <Fit w={151}>A Smarter Way to Learn </Fit>
                <Green><Fit w={66}>JavaScript</Fit></Green>
                <Fit w={86}>{"  /  Chapter 16"}</Fit>
              </ChapterTitle>
              <Numbers>
                <span />
                {Array.from({ length: 20 }, (_, i) => <span key={i}>{i + 1}</span>)}
              </Numbers>
            </ChapterBox>
            <Dots />
          </Masthead>
          <Card $h={259} $top={7}>
            <CardHead><Fit w={536}>Congratulations. You've aced all the exercises for this chapter.</Fit></CardHead>
            <Para>
              <Line>
                <Fit w={26}>To </Fit><Hi><Fit w={171}>practice on your own</Fit></Hi>
                <Fit w={241}>, or to check code you believe </Fit><Hi><Fit w={120}>shouldn't have</Fit></Hi>
              </Line>
              <Line>
                <Hi><Fit w={197}>been scored as incorrect</Fit></Hi><Fit w={55}>, go to </Fit>
                <Link><Fit w={65}>jsFiddle</Fit></Link><Fit w={115}>. See my brief </Fit>
                <Link><Fit w={136}>demo of jsFiddle</Fit></Link><span>.</span>
              </Line>
            </Para>
            <Para>
              <Line>
                <Hi><Fit w={204}>Post a review on Amazon</Fit></Hi><Fit w={64}> for the </Fit>
                <Link><Fit w={85}>paperback</Fit></Link><Fit w={57}> or the </Fit>
                <Link><Fit w={116}>Kindle edition</Fit></Link><span>.</span>
              </Line>
            </Para>
            <Para>
              <Line><Link><Fit w={78}>Email me</Fit></Link><Fit w={443}> to give me a compliment, complaint, or correction. I'll</Fit></Line>
              <Line><Fit w={71}>respond.</Fit></Line>
            </Para>
            <WebButtons>
              <WebButton $w={165}><Fit w={133}>Return to index of exercises</Fit></WebButton>
              <WebButton $w={143}><Fit w={121}>Return to site home page</Fit></WebButton>
            </WebButtons>
          </Card>
          <Card $h={120} $top={12}>
            <CardHead $in={9}><Fit w={520}>All of my books include free interactive online exercises that</Fit></CardHead>
            <CardHead><Fit w={228}>make the knowledge stick.</Fit></CardHead>
            <Stores>
              {[0, 1, 2, 3, 4].map((i) => <Store key={i}><Fit w={62}>amazon</Fit></Store>)}
            </Stores>
          </Card>
        </PageMain>
        <PageScroll>
          <ScrollEnd><svg width="6" height="4" viewBox="0 0 6 4"><path d="M0 4h6L3 0z" fill="#999" /></svg></ScrollEnd>
          <PageThumb />
          <ScrollEnd $last><svg width="6" height="4" viewBox="0 0 6 4"><path d="M0 0h6L3 4z" fill="#444" /></svg></ScrollEnd>
        </PageScroll>
      </PageArea>
      <MiniBar>
        <WinLogo s={13} />
        <MiniSearch>
          <Lens s={13} t={2} />
          <Fit w={101}>Type here to search</Fit>
          <Beach w={61} h={28} />
        </MiniSearch>
        <TaskView s={13} c="#bbb" />
        <PlayGames s={18} />
        <FaWhatsapp size={20} color="#2fd366" />
        <Edge s={19} />
        <FolderApp s={18} />
        <DevCpp s={18} />
        <VsCode s={19} />
        <Chrome s={19} />
        <Running><YouTube s={19} /><Badge $r={5}><Face s={11} /></Badge></Running>
        <Running $on><Chrome s={19} /><Badge $r={8}><Face s={11} /></Badge></Running>
        <Running><WordApp s={16} /></Running>
        <span />
        <SunCloud />
        <MiniTemp><Fit w={23}>28°C</Fit></MiniTemp>
        <span />
        <Chevron up w={10} h={6} c="#ccc" />
        <svg width="12" height="12" viewBox="0 0 12 12"><circle cx="6" cy="6" r="5.200" stroke="#eee" fill="none" strokeWidth="1.200" /><circle cx="6" cy="6" r="3" fill="#fff" /></svg>
        <Speaker s={12} />
        <Battery w={12} />
        <Wifi s={10} />
        <MiniClock><Fit w={35}>9:26 AM</Fit><Fit w={38}>7/5/2024</Fit></MiniClock>
        <Bubble>
          <svg width="14" height="14" viewBox="0 0 14 14"><path d="M0 0h13v10H8l-3 3v-3H0z" fill="#f2f2f2" /><path d="M2 2.500h9M2 5h9M2 7.500h6" stroke="#555" /></svg>
          <Count>1</Count>
        </Bubble>
        <Tick $h={31} $c="#6c6c78" $w={1} />
      </MiniBar>
    </>
  );
}

const st = { stroke: "#fff", fill: "none", strokeWidth: 1.6 };

function PhotosWindow() {
  return (
    <Photos>
      <PhotosBar>
        <HomeTile>
          <svg width="22" height="22" viewBox="0 0 22 22"><rect x="1" y="1" width="17" height="17" rx="3" {...st} /><path d="M3 17l6.500-6 7 6M20 5q1 1 1 3v7q0 6-6 6H8q-2 0-3-1" {...st} /><circle cx="13" cy="6.500" r="1.600" fill="#fff" /></svg>
        </HomeTile>
        <span />
        <PhotoTitle><Fit w={140}>Adding,removin...</Fit></PhotoTitle>
        <BarCell $y={24}>
          <svg width="25" height="25" viewBox="0 0 25 25"><path d="M21 9V2.500Q21 1 19.500 1h-17Q1 1 1 2.500v18h10M2 19l7-8 5 5" {...st} strokeWidth="1.700" /><circle cx="15" cy="7" r="1.800" {...st} strokeWidth="1.400" /><path d="M10.500 24l1.500-5 8-8.500q2-1.500 3.500.5t0 3.500l-8 8z" fill="#fff" /></svg>
        </BarCell>
        <BarCell $y={24}>
          <svg width="26" height="26" viewBox="0 0 26 26"><path d="M1 13A11.500 11.500 0 0 1 13 1a11.500 11.500 0 0 1 11.500 12q0 6-7.500 11M16.500 18v6.500H24" {...st} strokeWidth="1.800" /><circle cx="13" cy="13" r="2.200" {...st} /></svg>
        </BarCell>
        <BarCell $y={24}>
          <svg width="24" height="26" viewBox="0 0 24 26"><path d="M1 4.500h22M8.500 4q0-3 3.500-3t3.500 3M3.200 5l2 18q.2 1.500 2 1.500h9.600q1.800 0 2-1.500l2-18M10 10v9M14 10v9" {...st} /></svg>
        </BarCell>
        <BarCell $y={24}>
          <svg width="25" height="24" viewBox="0 0 25 24"><path d="M12.500 22.500L2.500 12Q-.5 8 2 4q4-5 9-1l1.500 2L14 3q5-4 9 1 2.500 4-.5 8z" {...st} /></svg>
        </BarCell>
        <BarCell $y={24}>
          <svg width="24" height="24" viewBox="0 0 24 24"><circle cx="12" cy="12" r="11" {...st} /><path d="M12 10v8" {...st} /><circle cx="12" cy="6.800" r="1.200" fill="#fff" /></svg>
        </BarCell>
        <BarCell $y={25}>
          <svg width="28" height="5" viewBox="0 0 28 5"><circle cx="2.500" cy="2.500" r="2" fill="#fff" /><circle cx="14" cy="2.500" r="2" fill="#fff" /><circle cx="25.500" cy="2.500" r="2" fill="#fff" /></svg>
        </BarCell>
        <span />
        <BarCell $y={12}><Minus w={15} c="#fff" t={1.300} /></BarCell>
        <BarCell $y={12}><svg width="15" height="15" viewBox="0 0 15 15"><path d="M.6.6h13.800v13.800H.6z" {...st} strokeWidth="1.200" /></svg></BarCell>
        <BarCell $y={12}><Cross s={15} c="#fff" /></BarCell>
      </PhotosBar>
      <BrowserShot />
      <PhotosFoot>
        <svg width="25" height="19" viewBox="0 0 25 19"><rect x="1" y="1" width="23" height="17" rx="3" {...st} strokeWidth="1.800" /><path d="M1 13h23M5.500 13v5M10 13v5M15 13v5M19.500 13v5" {...st} strokeWidth="1.300" /></svg>
        <Tick $h={36} $c="#3f3f3f" />
        <span />
        <PhotosZoom><Fit w={40}>51%</Fit></PhotosZoom>
        <svg width="23" height="23" viewBox="0 0 23 23"><circle cx="9" cy="9" r="8" {...st} stroke="#6f6f6f" /><path d="M5 9h8M15 15l7 7" {...st} stroke="#6f6f6f" /></svg>
        <svg width="23" height="23" viewBox="0 0 23 23"><circle cx="9" cy="9" r="8" {...st} /><path d="M5 9h8M9 5v8M15 15l7 7" {...st} strokeWidth="1.800" /></svg>
        <svg width="25" height="19" viewBox="0 0 25 19"><rect x="1" y="1" width="23" height="17" rx="2" {...st} stroke="#777" /><path d="M5 7V4.500h4M16 4.500h4V7M20 12v2.500h-4M9 14.500H5V12" {...st} stroke="#777" /></svg>
        <svg width="25" height="19" viewBox="0 0 25 19"><rect x="1" y="1" width="23" height="17" rx="3" {...st} strokeWidth="1.800" /><text x="12.500" y="14" textAnchor="middle" fontFamily="Open Sans, sans-serif" fontWeight="700" fontSize="12" fill="#fff">1:1</text></svg>
        <Tick $h={36} $c="#3f3f3f" />
        <svg width="23" height="23" viewBox="0 0 23 23"><path d="M1 22L22 1M12 1h10v10M1 12v10h10" {...st} strokeWidth="1.800" /></svg>
      </PhotosFoot>
    </Photos>
  );
}

/* ---------- taskbar ---------- */

const Taskbar = styled.nav`
  display: flex;
  height: 60px;
  background: linear-gradient(90deg, #1e1e2b, #1f1f2c 50%, #232335 75%, #1f1f2c);
  font-size: 20px;
`;

const StartCell = styled.div`
  display: flex;
  width: 72px;
  align-items: center;
  justify-content: center;
`;

const SearchBox = styled.div`
  display: flex;
  width: 432px;
  align-items: center;
  padding-left: 16px;
  gap: 17px;
  border: 2px solid #6c6c6c;
  background: #464646;
  color: #dedede;
  font-size: 21px;
  & > :last-child { margin: 0 -2px -2px auto; align-self: flex-end; }
`;

const SearchHint = styled.span`
  padding-top: 2px;
`;

const Apps = styled.div`
  display: grid;
  grid-template-columns: 73px repeat(9, 75px);
  padding-left: 1px;
`;

const AppCell = styled.div<{ $run?: boolean; $on?: boolean; $split?: boolean }>`
  display: flex;
  width: ${(p) => (p.$on ? 73 : p.$run ? 61 : 73)}px;
  margin: 0 auto;
  align-items: center;
  justify-content: center;
  padding-top: ${(p) => (p.$run || p.$on ? 3 : 0)}px;
  border-bottom: ${(p) => (p.$run || p.$on ? "3px solid #b4b4b4" : "0")};
  ${(p) => p.$split && css`border-image: linear-gradient(90deg, #b4b4b4 77%, #858585 77%) 3;`}
  background: ${(p) => (p.$on ? "#36363f" : "none")};
`;

const Tray = styled.div`
  display: grid;
  grid-template-columns: 54px 48px 70px 16px 36px 36px 36px 38px 100px 62px;
  align-items: center;
  justify-items: center;
  margin-left: auto;
  margin-right: 12px;
  font-size: 19.500px;
`;

const TrayClock = styled.div`
  display: flex;
  flex-direction: column;
  align-items: center;
  font-size: 17px;
  line-height: 28px;
  padding-top: 1px;
`;

const Weather = styled.span`
  padding-top: 2px;
`;

const Peek = styled.i`
  width: 2px;
  margin-right: 6px;
  background: #7a7a84;
`;

function TaskbarView() {
  return (
    <Taskbar>
      <StartCell><WinLogo /></StartCell>
      <SearchBox>
        <Lens s={25} />
        <SearchHint><Fit w={197}>Type here to search</Fit></SearchHint>
        <Beach />
      </SearchBox>
      <Apps>
        <AppCell><TaskView /></AppCell>
        <AppCell><PlayGames /></AppCell>
        <AppCell><FaWhatsapp size={41} color="#2fd366" /></AppCell>
        <AppCell><Edge /></AppCell>
        <AppCell><DevCpp /></AppCell>
        <AppCell $run><VsCode /></AppCell>
        <AppCell $run $split><FolderApp /></AppCell>
        <AppCell><Chrome /></AppCell>
        <AppCell><YouTube /></AppCell>
        <AppCell $on><PhotoGlyph w={32} h={32} /></AppCell>
      </Apps>
      <Tray>
        <Haze />
        <Weather><Fit w={44}>34°C</Fit></Weather>
        <Weather><Fit w={46}>Haze</Fit></Weather>
        <span />
        <Chevron up w={19} h={11} c="#ddd" t={1.300} />
        <Speaker />
        <Battery />
        <Wifi />
        <TrayClock><Fit w={66}>6:31 PM</Fit><Fit w={74}>7/5/2024</Fit></TrayClock>
        <Note />
      </Tray>
      <Peek />
    </Taskbar>
  );
}

export default function App() {
  return (
    <Desktop>
      <Global />
      <ExplorerWindow />
      <PropertiesDialog />
      <PhotosWindow />
      <TaskbarView />
    </Desktop>
  );
}
